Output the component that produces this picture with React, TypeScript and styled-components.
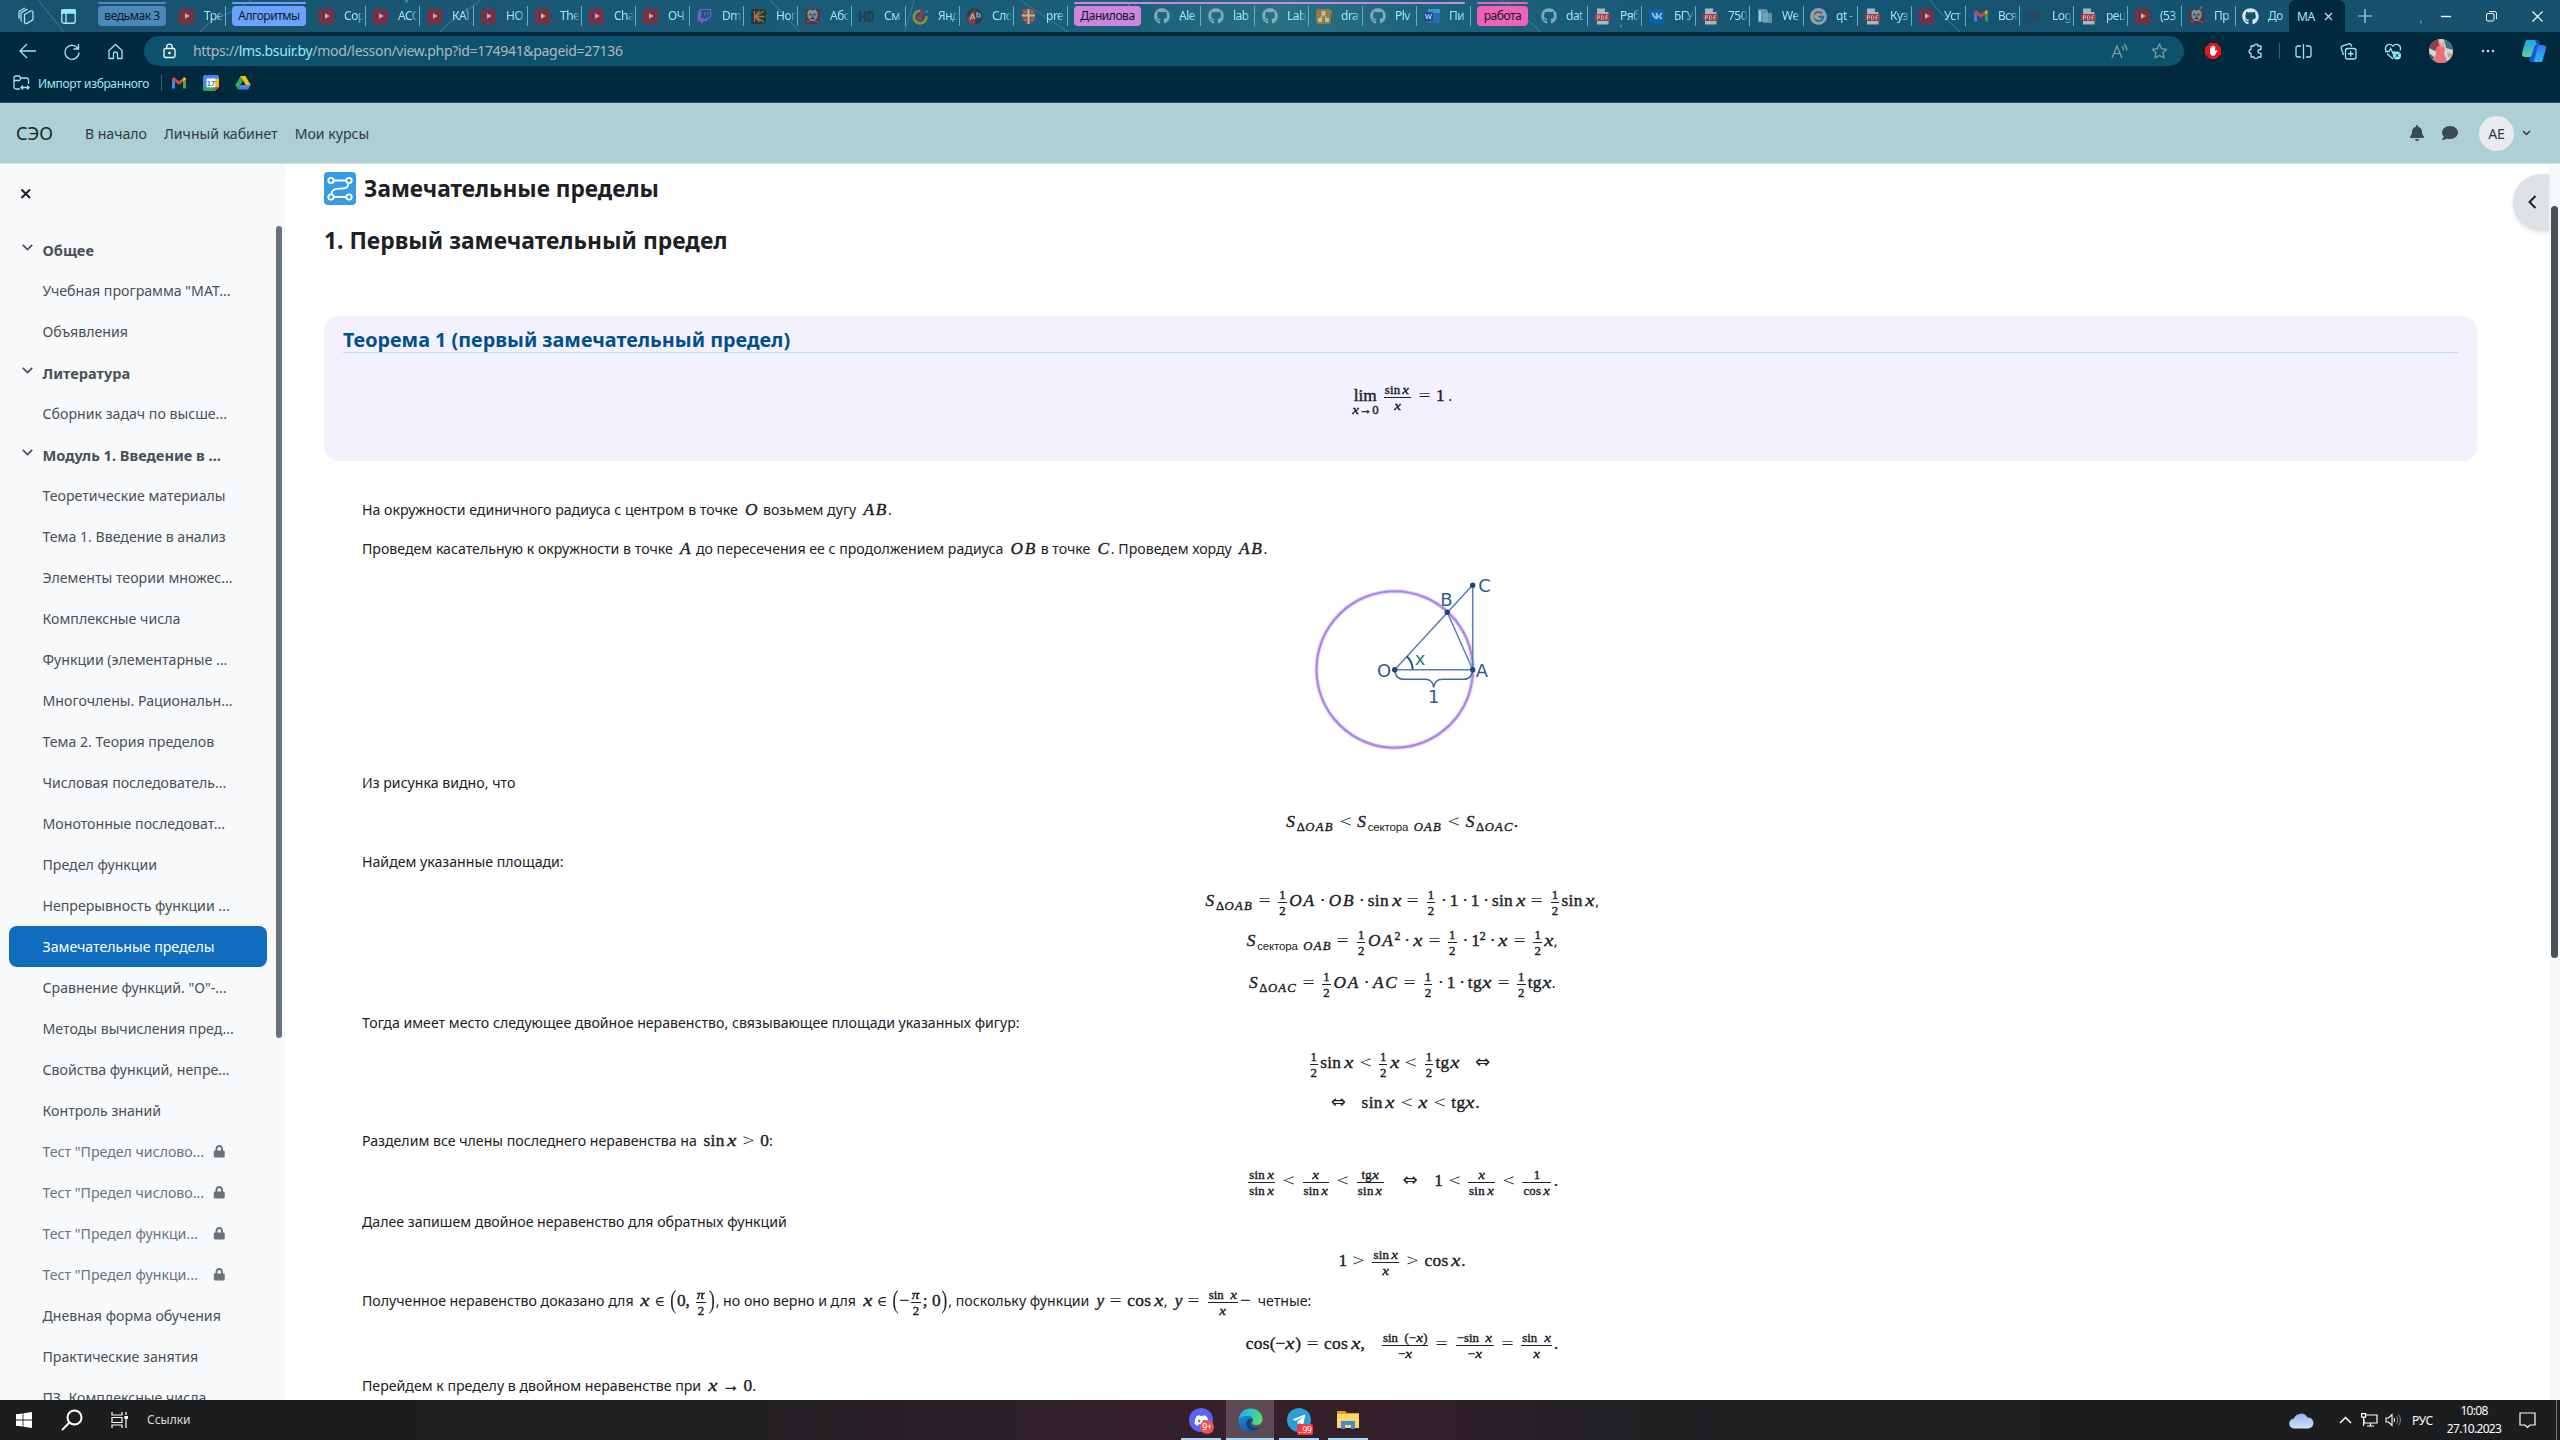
import React from 'react';
import styled, { createGlobalStyle, css } from 'styled-components';
import { FaGithub, FaTwitch, FaVk, FaBell, FaComment, FaLock, FaDiscord, FaTelegramPlane, FaGraduationCap } from 'react-icons/fa';

const GlobalStyle = createGlobalStyle`
  *, *::before, *::after { box-sizing: border-box; }
  html, body { margin: 0; padding: 0; background: #fff; }
  body { font-family: "Noto Sans", "Open Sans", sans-serif; overflow: hidden; }
`;

/* ---------- shell ---------- */
const Desktop = styled.div`
  width: 2560px;
  height: 1440px;
  display: flex;
  flex-direction: column;
  overflow: hidden;
`;

/* ---------- tab strip ---------- */
const TabStrip = styled.div`
  height: 32px;
  flex: none;
  position: relative;
  display: flex;
  color: #9be8f8;
  background: linear-gradient(90deg, #17526e 0%, #1a5975 25%, #1a5f7a 44%, #2a7083 50%, #1d627d 56%, #155473 70%, #16516d 100%);
`;
const StripTexture = styled.svg`
  position: absolute;
  inset: 0;
`;
const StripLead = styled.div`
  width: 92px;
  position: relative;
  display: flex;
  align-items: center;
  padding-left: 18px;
  gap: 26px;
`;
const Group = styled.div`
  position: relative;
  display: flex;
  align-items: flex-start;
  padding: 6px 6px 0;
`;
const GroupChip = styled.div<{ $color: string; $width: number }>`
  width: ${p => p.$width}px;
  height: 20px;
  border-radius: 4px;
  background: ${p => p.$color};
  color: #0b1a2a;
  font-size: 12px;
  letter-spacing: -0.45px;
  line-height: 19px;
  text-align: center;
  white-space: nowrap;
`;
const GroupBar = styled.div<{ $color: string; $width: number }>`
  position: absolute;
  top: 2px;
  left: 6px;
  width: ${p => p.$width}px;
  height: 2px;
  border-radius: 1px;
  background: ${p => p.$color};
  z-index: 1;
`;
const TabBox = styled.div<{ $plain?: boolean }>`
  width: 54px;
  height: 20px;
  margin-top: 6px;
  position: relative;
  display: flex;
  align-items: center;
  gap: 9px;
  padding-left: 6px;
  ${p => !p.$plain && css`border-right: 1px solid #5fb2c6;`}
`;
const Fav = styled.span`
  flex: none;
  width: 17px;
  height: 17px;
  display: flex;
  align-items: center;
  justify-content: center;
  opacity: 0.85;
`;
const TabText = styled.span`
  width: 21px;
  white-space: nowrap;
  font-size: 12px;
  line-height: 18px;
  letter-spacing: -0.5px;
  mask-image: linear-gradient(90deg, #000 60%, transparent 96%);
`;
const ActiveTab = styled.div`
  width: 56px;
  margin-left: -1px;
  position: relative;
  display: flex;
  align-items: center;
  justify-content: space-between;
  padding: 0 12px 0 8px;
  background: #01293e;
  border-radius: 6px 6px 0 0;
  font-size: 12px;
  letter-spacing: -0.3px;
`;
const WindowControls = styled.div`
  position: relative;
  flex: 1;
  display: flex;
  align-items: center;
  justify-content: space-between;
  padding: 0 17px 0 13px;
  color: #fff;
`;
const ControlButtons = styled.div`
  display: flex;
  align-items: center;
  gap: 35px;
`;
const FavSquare = styled.span<{ $bg: string; $fg?: string }>`
  width: 15px;
  height: 15px;
  border-radius: 3px;
  display: flex;
  align-items: center;
  justify-content: center;
  background: ${p => p.$bg};
  color: ${p => p.$fg ?? '#fff'};
  line-height: 1;
`;

type FavKind = 'yt' | 'twitch' | 'claw' | 'face' | 'hd' | 'ymusic' | 'ab' | 'crest' | 'gh' | 'ghw' | 'draw' | 'word' | 'pdf' | 'vk' | 'doc' | 'google' | 'gmail' | 'cap';

function GmailMark({ size }: { size: number }) {
  return (
    <svg width={size} height={size} viewBox="0 0 16 16">
      <path d="M1 13.500V4.200l3 2.300v7z" fill="#4285f4" />
      <path d="M12 13.500v-7l3-2.300v9.300z" fill="#34a853" />
      <path d="M1 4.200C1 2.600 2.700 2 4 3l4 3.200L12 3c1.300-1 3-.4 3 1.200L12 6.700 8 9.800 4 6.700z" fill="#ea4335" />
      <path d="M12 3c1.300-1 3-.4 3 1.200L12 6.700z" fill="#fbbc04" />
    </svg>
  );
}

function Favicon({ kind }: { kind: FavKind }) {
  switch (kind) {
    case 'yt': return <FavSquare $bg="#8a2a3c"><svg width="8" height="8" viewBox="0 0 8 8"><path d="M2 1.200v5.600L6.800 4z" fill="#dcc3cc" /></svg></FavSquare>;
    case 'twitch': return <FaTwitch size={15} color="#8264d8" />;
    case 'claw': return <FavSquare $bg="#2a2f33"><svg width="13" height="13" viewBox="0 0 13 13" stroke="#c07a3c" strokeWidth="1.300" fill="none"><path d="M2.500 1v11M12 1L3 6.500 12 12M3 6.500h9.500M7.500 1L3 6.500 7.500 12" /></svg></FavSquare>;
    case 'face': return <FavSquare $bg="#5a2f3a"><svg width="15" height="15" viewBox="0 0 15 15"><path d="M2.500 3l2-2.500 3 1 3-1 2 2.500v5l-3 4h-4l-3-4z" fill="#8f9ba3" /><path d="M4.500 5.500h2M8.500 5.500h2M5.500 9.500h4M7.500 6.500v1.500" stroke="#1c2c36" strokeWidth="1.300" /><path d="M1 13l4-1M10 12l4 1.500" stroke="#a8384a" strokeWidth="2" /></svg></FavSquare>;
    case 'hd': return <svg width="17" height="13" viewBox="0 0 17 13" fill="none" stroke="#263a47" strokeWidth="2.200"><path d="M2 1v11M7 1v11M2 6.500h5M10.500 2v9h1.500c4 0 4-9 0-9z" /></svg>;
    case 'ymusic': return <svg width="17" height="17" viewBox="0 0 17 17"><path d="M9 2.800A6.300 6.300 0 1 0 14.300 8" fill="none" stroke="#a99a2e" strokeWidth="2.600" /><circle cx="7.500" cy="10" r="2.500" fill="#b8323a" /><path d="M9 10V3l3 3" stroke="#b8323a" strokeWidth="1.800" fill="none" /><circle cx="14.500" cy="3.500" r="1.300" fill="#3a9ad0" /></svg>;
    case 'ab': return <svg width="17" height="17" viewBox="0 0 17 17"><circle cx="8.500" cy="8.500" r="8" fill="#2c3a44" /><path d="M9 .5L1 10a8 8 0 0 0 8 6.500z" fill="#a5353c" /><path d="M4 12l2.500-6L9 11M5 10h3M11 4v5h3V6h-3" stroke="#b9c4ca" fill="none" strokeWidth="1.200" /></svg>;
    case 'crest': return <svg width="15" height="17" viewBox="0 0 15 17"><path d="M1 1h13v9c0 3-3 5-6.500 6.500C4 15 1 13 1 10z" fill="#a04a48" /><path d="M7.500 1v15M1 7.500h13" stroke="#d5d2b0" strokeWidth="2" /><path d="M4 3v10M11 3v10" stroke="#c9b24e" strokeDasharray="2 2" /></svg>;
    case 'gh': return <FaGithub size={16} color="#8fb9c6" />;
    case 'ghw': return <FaGithub size={17} color="#fff" />;
    case 'draw': return <FavSquare $bg="#b07a2c"><svg width="13" height="13" viewBox="0 0 13 13" fill="#c9d0cc"><path d="M4.500 1h4v4h-4zM1 8h4v4H1zM8 8h4v4H8z" /><path d="M6.500 4L3 9M6.500 4L10 9" stroke="#c9d0cc" strokeWidth="1.200" /></svg></FavSquare>;
    case 'word': return <svg width="16" height="16" viewBox="0 0 16 16"><path d="M4 1h12v14H4z" fill="#2d6fb8" /><path d="M4 1h12v4H4z" fill="#4b9bd8" /><path d="M0 4h9v9H0z" fill="#1d4f9c" /><path d="M1.500 6l1.500 5 1.500-4.500L6 11l1.500-5" stroke="#d5e3f3" fill="none" /></svg>;
    case 'pdf': return <svg width="15" height="17" viewBox="0 0 15 17"><path d="M2 .5h8l3.500 3.500v12.500H2z" fill="#b9ccd3" /><path d="M10 .5V4h3.500z" fill="#264858" /><path d="M0 6h15v7H0z" fill="#b83a44" /><path d="M2.500 12V7.700h2v2h-2M6.500 7.700v3.800h1.200c1.500 0 1.500-3.800 0-3.800zM11 12V7.700h2M11 9.700h1.700" stroke="#e3c9ce" fill="none" strokeWidth=".9" /></svg>;
    case 'vk': return <FavSquare $bg="#0b63b5" $fg="#a9cfe6"><FaVk size={12} /></FavSquare>;
    case 'doc': return <svg width="16" height="16" viewBox="0 0 16 16"><path d="M1 1h8l2 2v11H1z" fill="#6d9fba" /><path d="M6 5h9v10H6z" fill="#8fb8cc" opacity=".7" /><path d="M3 3v10" stroke="#c7dde6" strokeWidth="2" /></svg>;
    case 'google': return <svg width="17" height="17" viewBox="0 0 17 17"><circle cx="8.500" cy="8.500" r="8.500" fill="#9ab3bc" /><g fill="none" strokeWidth="2"><path d="M12 5.500A4.600 4.600 0 0 0 4.600 6.300" stroke="#b8404a" /><path d="M4.600 6.300a4.600 4.600 0 0 0 0 4.400" stroke="#c29b2b" /><path d="M4.600 10.700a4.600 4.600 0 0 0 7 1.300" stroke="#2e8c54" /><path d="M11.600 12a4.600 4.600 0 0 0 1.500-3.200H8.500" stroke="#3267b8" /></g></svg>;
    case 'gmail': return <GmailMark size={16} />;
    case 'cap': return <FaGraduationCap size={16} color="#2a4756" />;
  }
}

interface TabInfo { text: string; icon: FavKind }
const youtubeTabs: TabInfo[] = ['Сор', 'АСС', 'КАІ', 'НО', 'The', 'Cha', 'ОЧ'].map(text => ({ text, icon: 'yt' as const }));
const middleTabs: TabInfo[] = [
  ...youtubeTabs,
  { text: 'Dm', icon: 'twitch' }, { text: 'Ног', icon: 'claw' }, { text: 'Абс', icon: 'face' }, { text: 'См', icon: 'hd' },
  { text: 'Янд', icon: 'ymusic' }, { text: 'Сло', icon: 'ab' }, { text: 'pre', icon: 'crest' },
];
const danilovaTabs: TabInfo[] = [
  { text: 'Ale', icon: 'gh' }, { text: 'lab', icon: 'gh' }, { text: 'Lab', icon: 'gh' }, { text: 'dra', icon: 'draw' },
  { text: 'Plv', icon: 'gh' }, { text: 'Пи', icon: 'word' },
];
const workTabs: TabInfo[] = [
  { text: 'dat', icon: 'gh' }, { text: 'Ряб', icon: 'pdf' }, { text: 'БГУ', icon: 'vk' }, { text: '750', icon: 'pdf' },
  { text: 'We', icon: 'doc' }, { text: 'qt -', icon: 'google' }, { text: 'Куз', icon: 'pdf' }, { text: 'Уст', icon: 'yt' },
  { text: 'Вся', icon: 'gmail' }, { text: 'Log', icon: 'cap' }, { text: 'рец', icon: 'pdf' }, { text: '(53', icon: 'yt' },
  { text: 'Пр', icon: 'face' },
];

function Tab({ tab, plain }: { tab: TabInfo; plain?: boolean }) {
  return <TabBox $plain={plain}><Fav><Favicon kind={tab.icon} /></Fav><TabText>{tab.text}</TabText></TabBox>;
}
function TabGroup({ name, color, width, bar }: { name: string; color: string; width: number; bar: number }) {
  return <Group><GroupBar $color={color} $width={bar} /><GroupChip $color={color} $width={width}>{name}</GroupChip></Group>;
}

/* ---------- toolbar ---------- */
const Toolbar = styled.div`
  height: 36px;
  flex: none;
  display: flex;
  align-items: center;
  padding-top: 2px;
  background: #01293e;
  color: #9be8f8;
`;
const NavButtons = styled.div`
  width: 144px;
  display: flex;
  align-items: center;
  gap: 28px;
  padding-left: 19px;
`;
const AddressBar = styled.div`
  width: 2040px;
  height: 30px;
  border-radius: 15px;
  background: #0d526d;
  display: flex;
  align-items: center;
  padding: 0 16px 0 19px;
`;
const Url = styled.span`
  flex: 1;
  margin: -2px 0 0 17px;
  font-size: 14px;
  letter-spacing: -0.32px;
  color: #b3b8bb;
`;
const UrlHost = styled.span`color: #9be8f8;`;
const AddressIcons = styled.div`
  display: flex;
  gap: 23px;
  color: #8d9ca3;
`;
const ToolIcons = styled.div`
  flex: 1;
  display: flex;
  align-items: center;
  justify-content: space-between;
  padding: 0 14px 0 21px;
`;
const ThinRule = styled.span<{ $pull?: number }>`
  width: 1px;
  height: 16px;
  margin: 0 ${p => -(p.$pull ?? 0)}px;
  background: #3a5c6d;
`;
const Profile = styled.svg`
  border-radius: 50%;
`;
const BookmarkBar = styled.div`
  height: 35px;
  flex: none;
  display: flex;
  align-items: center;
  padding: 0 0 4px 13px;
  background: #01293e;
  border-bottom: 1px solid #1a566f;
  color: #9be8f8;
  font-size: 12px;
  letter-spacing: -0.36px;
`;
const BookmarkLabel = styled.span`margin: 0 12px 0 8px;`;
const BookmarkIcons = styled.div`
  display: flex;
  align-items: center;
  gap: 16px;
  margin-left: 9px;
`;

/* ---------- site header ---------- */
const SiteHeader = styled.header`
  height: 61px;
  flex: none;
  display: flex;
  align-items: center;
  padding: 0 29px 0 16px;
  background: #aecfd4;
  border-bottom: 1px solid #d3e4e7;
  color: #1f2b30;
`;
const Brand = styled.span`
  font-size: 18px;
  margin-right: 32px;
  color: #16232a;
`;
const HeaderNav = styled.nav`
  flex: 1;
  display: flex;
  gap: 17px;
  font-size: 14.100px;
  color: #2c3a40;
`;
const HeaderTools = styled.div`
  display: flex;
  align-items: center;
  color: #3b4a50;
`;
const HeaderIcon = styled.span<{ $mr: number }>`
  display: flex;
  margin-right: ${p => p.$mr}px;
`;
const Avatar = styled.span`
  width: 35px;
  height: 35px;
  border-radius: 50%;
  background: #e9ecef;
  color: #343a40;
  font-size: 14px;
  display: flex;
  align-items: center;
  justify-content: center;
  margin-right: 8px;
`;

/* ---------- course index ---------- */
const Page = styled.div`
  flex: 1;
  min-height: 0;
  display: flex;
  background: #fff;
`;
const Sidebar = styled.aside`
  width: 285px;
  flex: none;
  display: flex;
  flex-direction: column;
  background: #f8f9fb;
  overflow: hidden;
`;
const SidebarTop = styled.div`
  height: 62px;
  flex: none;
  padding: 19px 0 0 20px;
`;
const SidebarBody = styled.div`
  flex: 1;
  min-height: 0;
  display: flex;
  justify-content: space-between;
  padding-right: 3px;
`;
const IndexList = styled.div`
  width: 258px;
  margin: 3px 0 0 9px;
`;
const IndexRow = styled.div<{ $section?: boolean; $active?: boolean; $dim?: boolean }>`
  height: 41px;
  display: flex;
  align-items: center;
  padding-left: ${p => (p.$section ? 12.500 : 33.500)}px;
  border-radius: 8px;
  white-space: nowrap;
  font-size: 14.150px;
  color: ${p => (p.$dim ? '#6a737b' : '#495057')};
  ${p => p.$section && css`font-weight: 700; font-size: 14.600px;`}
  ${p => p.$active && css`background: #0f6cbf; color: #fff;`}
`;
const Caret = styled.svg`
  width: 11px;
  margin: -4px 10px 0 0;
`;
const LockedText = styled.span`
  width: 170px;
`;
const IndexThumb = styled.div`
  width: 6px;
  height: 812px;
  border-radius: 3px;
  background: #6a737b;
`;

interface IndexItem { text: string; kind?: 'section' | 'active' | 'locked' }
const indexItems: IndexItem[] = [
  { text: 'Общее', kind: 'section' },
  { text: 'Учебная программа "МАТ...' },
  { text: 'Объявления' },
  { text: 'Литература', kind: 'section' },
  { text: 'Сборник задач по высше...' },
  { text: 'Модуль 1. Введение в ...', kind: 'section' },
  { text: 'Теоретические материалы' },
  { text: 'Тема 1. Введение в анализ' },
  { text: 'Элементы теории множес...' },
  { text: 'Комплексные числа' },
  { text: 'Функции (элементарные ...' },
  { text: 'Многочлены. Рациональн...' },
  { text: 'Тема 2. Теория пределов' },
  { text: 'Числовая последователь...' },
  { text: 'Монотонные последоват...' },
  { text: 'Предел функции' },
  { text: 'Непрерывность функции ...' },
  { text: 'Замечательные пределы', kind: 'active' },
  { text: 'Сравнение функций. "О"-...' },
  { text: 'Методы вычисления пред...' },
  { text: 'Свойства функций, непре...' },
  { text: 'Контроль знаний' },
  { text: 'Тест "Предел числово...', kind: 'locked' },
  { text: 'Тест "Предел числово...', kind: 'locked' },
  { text: 'Тест "Предел функци...', kind: 'locked' },
  { text: 'Тест "Предел функци...', kind: 'locked' },
  { text: 'Дневная форма обучения' },
  { text: 'Практические занятия' },
  { text: 'ПЗ. Комплексные числа' },
];

/* ---------- lesson ---------- */
const Main = styled.main`
  flex: 1;
  min-width: 0;
  padding: 8px 72px 0 39px;
  color: #1d2125;
  overflow: hidden;
`;
const TitleRow = styled.div`
  display: flex;
  align-items: center;
  gap: 8px;
  height: 33px;
`;
const Title = styled.h1`
  margin: 0;
  font-size: 22.650px;
  line-height: 33px;
`;
const Subtitle = styled.h2`
  margin: 20px 0 0;
  font-size: 22.850px;
  line-height: 32px;
`;
const TheoremBox = styled.section`
  margin-top: 59px;
  height: 145px;
  border-radius: 15px;
  background: #f3f0ff;
  padding: 12px 19px 0;
`;
const TheoremTitle = styled.h3`
  margin: 0;
  height: 25px;
  line-height: 24px;
  font-size: 19.800px;
  color: #00508c;
  border-bottom: 1px solid #b9defb;
`;
const Proof = styled.div`
  margin-top: 29px;
  padding: 0 38px;
`;
const Line = styled.div<{ $h: number; $center?: boolean }>`
  height: ${p => p.$h}px;
  line-height: ${p => p.$h}px;
  white-space: nowrap;
  font-size: 14.150px;
  text-align: ${p => (p.$center ? 'center' : 'left')};
`;
const Figure = styled.div`
  height: 196px;
  display: flex;
  justify-content: center;
  align-items: flex-end;
`;

/* math typesetting */
const M = styled.span`
  font-family: "Liberation Serif", "Times New Roman", serif;
  font-size: 17.300px;
  margin-left: 3px;
  -webkit-text-stroke: 0.4px currentColor;
`;
const It = styled.i<{ $flush?: boolean }>`
  letter-spacing: ${p => (p.$flush ? '0' : '0.1em')};
  margin-left: 0.03em;
`;
const X = styled.i`
  display: inline-block;
  width: 0.572em;
  line-height: 1;
  text-align: center;
  transform: scaleX(1.200);
`;
const Fn = styled.span<{ $tight?: boolean }>`
  letter-spacing: 0.02em;
  margin-right: ${p => (p.$tight ? 0 : '0.15em')};
`;
const Rel = styled.span`
  display: inline-block;
  width: 0.778em;
  margin: 0 0.278em;
  line-height: 1;
  text-align: center;
  transform: scaleX(1.250);
  -webkit-text-stroke: 0;
`;
const InRel = styled.span`
  margin: 0 0.3em;
  font-family: "DejaVu Serif", serif;
  font-size: 0.82em;
  -webkit-text-stroke: 0;
`;
const IffRel = styled.span`
  display: inline-block;
  width: 1em;
  margin: 0 0.278em;
  line-height: 1;
  text-align: center;
  font-family: "DejaVu Sans", sans-serif;
  font-size: 1.050em;
  -webkit-text-stroke: 0;
`;
const DotOp = styled.span`
  display: inline-block;
  width: 0.278em;
  margin: 0 0.222em;
  line-height: 1;
  text-align: center;
`;
const SubText = styled.span`
  font-size: 12.700px;
  line-height: 1;
  position: relative;
  top: 3.500px;
`;
const SubWord = styled.span`
  font-family: "Liberation Sans", Arial, sans-serif;
  font-size: 11.500px;
  -webkit-text-stroke: 0;
  margin-right: 5px;
  letter-spacing: -0.15px;
`;
const SupText = styled.span`
  font-size: 12px;
  line-height: 1;
  position: relative;
  top: -6px;
`;
const FracBox = styled.span`
  display: inline-flex;
  flex-direction: column;
  align-items: center;
  vertical-align: 7.500px;
  margin: 0 2.200px;
  font-size: 12.800px;
  line-height: 12px;
`;
const Num = styled.span`
  align-self: stretch;
  height: 13px;
  padding: 0 1px;
  text-align: center;
`;
const Den = styled.span`
  align-self: stretch;
  padding: 2px 1px 0;
  border-top: 1px solid #1d2125;
  text-align: center;
`;
const LimBox = styled.span`
  display: inline-flex;
  flex-direction: column;
  align-items: center;
  line-height: 16px;
  margin-right: 3px;
`;
const LimUnder = styled.span`
  font-size: 12.800px;
  line-height: 10px;
`;
const Big = styled.span`
  display: inline-block;
  line-height: 1;
  transform: scaleY(1.450);
  margin: 0 1px;
  -webkit-text-stroke: 0.1px currentColor;
`;
const Space = styled.span<{ $w: number }>`
  display: inline-block;
  width: ${p => p.$w}px;
`;

const Frac = ({ n, d }: { n: React.ReactNode; d: React.ReactNode }) => <FracBox><Num>{n}</Num><Den>{d}</Den></FracBox>;
const Half = () => <Frac n="1" d="2" />;
const x = <X>x</X>;
const sinx = <><Fn>sin</Fn>{x}</>;
const cosx = <><Fn>cos</Fn>{x}</>;
const tgx = <><Fn $tight>tg</Fn>{x}</>;
const lt = <Rel>&lt;</Rel>;
const gt = <Rel>&gt;</Rel>;
const eq = <Rel>=</Rel>;
const dot = <DotOp>·</DotOp>;
const iff = <IffRel>⇔</IffRel>;
const S = ({ tri, sector }: { tri?: string; sector?: boolean }) => (
  <><It>S</It><SubText>{sector ? <><SubWord>сектора</SubWord><It>OAB</It></> : <>Δ<It>{tri}</It></>}</SubText></>
);

function CircleFigure() {
  return (
    <svg width="200" height="194" viewBox="1301 569 200 194">
      <circle cx="1394.700" cy="669.500" r="78.200" fill="none" stroke="#e0d0fb" strokeWidth="4.200" />
      <circle cx="1394.700" cy="669.500" r="78.200" fill="none" stroke="#ab83e8" strokeWidth="2" />
      <g fill="none" stroke="#5a7fb5" strokeWidth="1.500">
        <path d="M1394.700 669.800L1472.700 585V669.800Z" />
        <path d="M1447.300 612.300L1472.700 669.800" />
        <path d="M1395 672c1 5 4 7.300 9 7.300h21c5 0 8 2 8.700 8 .7-6 3.700-8 8.700-8h21c5 0 8-2.300 9-7.300" stroke="#44679f" />
      </g>
      <path d="M1407 656.500q5.500 5.500 5.700 13" fill="none" stroke="#1f4480" strokeWidth="1.800" />
      <g fill="#1f4480"><circle cx="1394.700" cy="669.800" r="2.700" /><circle cx="1472.700" cy="669.800" r="2.700" /><circle cx="1447.300" cy="612.300" r="2.700" /><circle cx="1472.700" cy="585.300" r="2.700" /></g>
      <g fontFamily="DejaVu Sans, sans-serif" fontSize="18" fill="#33578f" textAnchor="middle">
        <text x="1384" y="677">O</text>
        <text x="1482" y="677">A</text>
        <text x="1446.500" y="605.500">B</text>
        <text x="1484.500" y="591.500">C</text>
        <text x="1433.700" y="702.500">1</text>
        <text x="1420" y="664.500" fill="#2b8077">x</text>
      </g>
    </svg>
  );
}

/* ---------- right edge ---------- */
const RightEdge = styled.div`
  position: relative;
  width: 11px;
  flex: none;
  background: #f8f9fa;
  padding: 42px 0 0 2px;
`;
const PageThumb = styled.div`
  width: 7px;
  height: 752px;
  border-radius: 4px;
  background: #495057;
`;
const DrawerToggle = styled.div`
  position: absolute;
  top: 10px;
  right: 11px;
  width: 36px;
  height: 57px;
  border-radius: 28px 0 0 28px;
  background: #dee2e6;
  box-shadow: 0 2px 4px rgba(0, 0, 0, 0.1);
  display: flex;
  align-items: center;
  justify-content: center;
  padding: 0 0 1px 2px;
`;

/* ---------- taskbar ---------- */
const Taskbar = styled.footer`
  height: 40px;
  flex: none;
  display: grid;
  grid-template-columns: 1172px 1fr 300px;
  color: #fff;
  background: linear-gradient(90deg, #1b1d1f 0%, #1d1e20 26%, #33202b 44%, #351f2b 50%, #301f29 56%, #222024 62%, #1c1e20 68%, #1b1d1f 100%);
`;
const TaskLeft = styled.div`
  display: flex;
  align-items: center;
  padding-left: 16px;
  font-size: 12px;
  color: #dcdcdc;
`;
const TaskLabel = styled.span`margin: -2px 0 0 19px;`;
const TaskIconWrap = styled.span<{ $ml: number }>`
  display: flex;
  margin-left: ${p => p.$ml}px;
`;
const TaskApps = styled.div`
  display: flex;
`;
const TaskApp = styled.div<{ $w: number; $current?: boolean; $ml: number }>`
  position: relative;
  width: ${p => p.$w}px;
  margin-left: ${p => p.$ml}px;
  height: 40px;
  display: flex;
  align-items: center;
  justify-content: center;
  border-bottom: 2px solid #a9d7f7;
  padding-top: 2px;
  background: ${p => (p.$current ? '#5c4a54' : 'transparent')};
`;
const RoundApp = styled.span<{ $bg: string }>`
  width: 24px;
  height: 24px;
  border-radius: 50%;
  background: ${p => p.$bg};
  display: flex;
  align-items: center;
  justify-content: center;
`;
const AppBadge = styled.span<{ $square?: boolean }>`
  position: absolute;
  right: ${p => (p.$square ? 6 : 7)}px;
  bottom: ${p => (p.$square ? 3 : 4)}px;
  width: ${p => (p.$square ? 16 : 14)}px;
  height: ${p => (p.$square ? 11 : 14)}px;
  border-radius: ${p => (p.$square ? '2px' : '50%')};
  background: ${p => (p.$square ? '#f13a3a' : '#ec5257')};
  font-size: 8.500px;
  letter-spacing: -0.2px;
  line-height: ${p => (p.$square ? 11 : 14)}px;
  text-align: center;
`;
const Tray = styled.div`
  display: flex;
  align-items: center;
  padding-left: 29px;
`;
const TrayItem = styled.span<{ $ml: number }>`
  display: flex;
  flex: none;
  margin-left: ${p => p.$ml}px;
  font-size: 12px;
  letter-spacing: -0.2px;
`;
const Clock = styled.div`
  width: 58px;
  margin-left: 12px;
  text-align: center;
  font-size: 12px;
  letter-spacing: -0.700px;
  line-height: 18px;
  white-space: nowrap;
`;
const DesktopPeek = styled.span`
  width: 1px;
  height: 40px;
  margin-left: 20px;
  background: #76787a;
`;

export default function App() {
  return (
    <Desktop>
      <GlobalStyle />
      <TabStrip>
        <StripTexture width="2560" height="32" fill="none" stroke="#4c8c9f" strokeWidth="1.500" opacity=".45">
          <path d="M38 0l26 32M200 32C210 18 240 10 252 0M440 32C455 14 478 5 480 0M770 0l30 32M905 32L914 0M1020 0L1068 32M1500 0q30 20 40 32M1930 0q12 16 30 32" />
          <path d="M405 1h3M466 10h2M1128 6h2M1180 20h2M1330 12h2M1620 26h2M2200 8h2M2420 22h2" stroke="#69c0dc" strokeWidth="3" />
        </StripTexture>
        <StripLead>
          <svg width="17" height="18" viewBox="0 0 17 18" fill="none" stroke="#9be8f8" strokeWidth="1.300" strokeLinejoin="round"><path d="M6.500 7.500l6-3.500c1-.5 2.500 0 2.500 1.500v6c0 .8-.4 1.500-1 1.900l-5 3c-1 .6-2.500 0-2.500-1.400zM4 14.500c-.6-.4-1-1-1-1.700v-6c0-.7.4-1.300 1-1.700l5.500-3M1 11.500V5.300c0-.7.400-1.300 1-1.600L7 1" /></svg>
          <svg width="15" height="15" viewBox="0 0 15 15" fill="none" stroke="#9be8f8" strokeWidth="1.400"><rect x=".8" y=".8" width="13.400" height="13.400" rx="2" /><path d="M.8 3h13.400M5 3v11" /><path d="M1 1h13v3H1z" fill="#9be8f8" /></svg>
        </StripLead>
        <TabGroup name="ведьмак 3" color="#4a89bb" width={68} bar={68} />
        <Tab tab={{ text: 'Тре', icon: 'yt' }} />
        <TabGroup name="Алгоритмы" color="#6ba2ff" width={74} bar={74} />
        {middleTabs.map((t, i) => <Tab key={i} tab={t} />)}
        <TabGroup name="Данилова" color="#cd86dc" width={67} bar={391} />
        {danilovaTabs.map((t, i) => <Tab key={i} tab={t} />)}
        <TabGroup name="работа" color="#f062b8" width={51} bar={51} />
        {workTabs.map((t, i) => <Tab key={i} tab={t} />)}
        <Tab plain tab={{ text: 'До', icon: 'ghw' }} />
        <ActiveTab><span>МА</span><svg width="9" height="9" stroke="#9be8f8" strokeWidth="1.300"><path d="M1 1l7 7M8 1L1 8" /></svg></ActiveTab>
        <WindowControls>
          <svg width="14" height="14" stroke="#9be8f8" strokeWidth="1.200"><path d="M7 0v14M0 7h14" /></svg>
          <ControlButtons>
            <svg width="10" height="10" stroke="#fff"><path d="M0 5.500h10" strokeWidth="1.400" /></svg>
            <svg width="11" height="11" fill="none" stroke="#fff"><rect x=".5" y="2.500" width="7.500" height="7.500" rx="1.500" /><path d="M3 .5h5.500a2 2 0 0 1 2 2V8" /></svg>
            <svg width="11" height="11" stroke="#fff" strokeWidth="1.200"><path d="M.5.5l10 10M10.500.5l-10 10" /></svg>
          </ControlButtons>
        </WindowControls>
      </TabStrip>

      <Toolbar>
        <NavButtons>
          <svg width="17" height="16" fill="none" stroke="currentColor" strokeWidth="1.300"><path d="M17 8H1M8 1L1 8l7 7" /></svg>
          <svg width="16" height="17" viewBox="0 0 16 17" fill="none" stroke="currentColor" strokeWidth="1.300"><path d="M14.200 6A7 7 0 1 0 15 9.500M14.500 1v5H9.500" /></svg>
          <svg width="15" height="17" viewBox="0 0 15 17" fill="none" stroke="currentColor" strokeWidth="1.300" strokeLinejoin="round"><path d="M1 7.500L7.500 1.500 14 7.500V15.500H9.500V11a2 2 0 0 0-4 0v4.500H1z" /></svg>
        </NavButtons>
        <AddressBar>
          <svg width="13" height="16" viewBox="0 0 13 16" fill="none" stroke="#fff" strokeWidth="1.300"><rect x="1" y="5.500" width="11" height="9" rx="1.500" /><path d="M3.700 5.500V4a2.800 2.800 0 0 1 5.600 0v1.500" /><circle cx="6.500" cy="10" r=".7" fill="#fff" /></svg>
          <Url>https://<UrlHost>lms.bsuir.by</UrlHost>/mod/lesson/view.php?id=174941&amp;pageid=27136</Url>
          <AddressIcons>
            <svg width="17" height="16" viewBox="0 0 17 16" fill="none" stroke="currentColor" strokeWidth="1.200"><path d="M1 15L6 3l5 12M2.800 10.500h6.400M11 3.500q1.500 1.500 1.500 4M13 1q3 2.500 2.800 6.500" /></svg>
            <svg width="17" height="16" viewBox="0 0 17 16" fill="none" stroke="currentColor" strokeWidth="1.200" strokeLinejoin="round"><path d="M8.500 1l2.200 4.700 5.100.6-3.800 3.500 1 5.100-4.500-2.500L4 14.900l1-5.100L1.200 6.300l5.100-.6z" /></svg>
          </AddressIcons>
        </AddressBar>
        <ToolIcons>
          <svg width="16" height="16" viewBox="0 0 16 16"><path d="M4.700 0h6.600L16 4.700v6.600L11.300 16H4.700L0 11.300V4.700z" fill="#e8131b" /><path d="M5 8.500V5a.7.7 0 0 1 1.300 0V3.500a.7.7 0 0 1 1.300 0V3a.7.7 0 0 1 1.300 0v.8a.7.7 0 0 1 1.300 0v4.500l1-1c.8-.4 1.300.2 1 .8l-2 3.800c-.5 1-3.300 1.200-4.200 0C5.300 11 5 10 5 8.500z" fill="#fff" /></svg>
          <svg width="15" height="16" viewBox="0 0 15 16" fill="none" stroke="currentColor" strokeWidth="1.300" strokeLinejoin="round"><path d="M3 3h3a2 1.800 0 0 1 4 0h3v3.500h-1a1.800 1.800 0 0 0 0 3.800h1V14h-3a2 1.600 0 0 1-4 0H3v-3.700a1.900 1.900 0 0 1 0-3.800z" /></svg>
          <ThinRule $pull={12} />
          <svg width="17" height="15" viewBox="0 0 17 15" fill="none" stroke="currentColor" strokeWidth="1.300"><path d="M6 2H3a2 2 0 0 0-2 2v7a2 2 0 0 0 2 2h3M11 2h3a2 2 0 0 1 2 2v7a2 2 0 0 1-2 2h-3M8.500 0v15" /></svg>
          <svg width="17" height="17" viewBox="0 0 17 17" fill="none" stroke="currentColor" strokeWidth="1.300"><rect x="5.500" y="5.500" width="10.500" height="10.500" rx="2.200" /><path d="M10.750 8v5.500M8 10.750h5.500M3.500 12L1.300 5.300a2 2 0 0 1 1.200-2.500L8.700.9a2 2 0 0 1 2.500 1.200l.4 1.400" /></svg>
          <svg width="18" height="17" viewBox="0 0 18 17" fill="none" stroke="currentColor" strokeWidth="1.300"><path d="M2 7.500C0 3 5-.8 9 3c4-3.800 9 0 7 4.500M1 8.500h4l1.700-3 2.300 5 1.500-2.500M3 10.500l6 5.500" /><circle cx="13" cy="12.500" r="4" fill="currentColor" stroke="none" /><path d="M11 14.500l4-4M11.500 11l3 3" stroke="#01293e" strokeWidth="1" /></svg>
          <Profile width="24" height="24" viewBox="0 0 24 24"><rect width="24" height="24" fill="#cfd9cf" /><path d="M0 0h9l3 7-6 5-6-3z" fill="#8c3f47" /><path d="M15 0l9 4v7l-7-2z" fill="#39737a" /><path d="M7 9c2-3 8-3 9 1l-1 5 4 9H3l4-9z" fill="#ea6f78" /><path d="M10 2l2 6M15 2l-2 6" stroke="#f4949a" strokeWidth="2" /><path d="M0 14l5 4-2 6H0z" fill="#2e6b63" /><path d="M18 13l6 2v5l-5-2z" fill="#d8a690" /></Profile>
          <svg width="14" height="4" fill="currentColor"><circle cx="2" cy="2" r="1.300" /><circle cx="7" cy="2" r="1.300" /><circle cx="12" cy="2" r="1.300" /></svg>
          <svg width="24" height="22" viewBox="0 0 24 22">
            <defs>
              <linearGradient id="cpA" x1="0" y1="0" x2="0" y2="1"><stop offset="0" stopColor="#1aa7ee" /><stop offset="1" stopColor="#5ed08a" /></linearGradient>
              <linearGradient id="cpB" x1="0" y1="0" x2="0" y2="1"><stop offset="0" stopColor="#2f7bf2" /><stop offset="1" stopColor="#2bb5f5" /></linearGradient>
            </defs>
            <path d="M5 0h9c2 0 2.500 1.500 2 3l-4 11c-.6 2-2 3-4 3H3c-2.500 0-3.500-2-2.800-4.300L3 3C3.400 1 4 0 5 0z" fill="url(#cpA)" />
            <path d="M13 0h2c1.500 0 2 1 2.400 2.500L18 5h-3z" fill="#0b50c8" />
            <path d="M19 22h-9c-2 0-2.500-1.500-2-3l4-11c.6-2 2-3 4-3h5c2.500 0 3.500 2 2.800 4.300L21 19c-.4 2-1 3-2 3z" fill="url(#cpB)" />
            <path d="M16 5h-3L9.500 15.500C9 17 8 17 6.500 17H7c1 3 1 5 4 5h1z" fill="#1856d8" />
          </svg>
        </ToolIcons>
      </Toolbar>
      <BookmarkBar>
        <svg width="17" height="16" viewBox="0 0 17 16" fill="none" stroke="currentColor" strokeWidth="1.300"><path d="M7 14H3a2 2 0 0 1-2-2V3a2 2 0 0 1 2-2h3l2 2h5.500a2 2 0 0 1 2 2v4M1 5.500h5.500L8 3M8 12.500h8M10 10.500l-2 2 2 2M14 10.500l2 2-2 2" /></svg>
        <BookmarkLabel>Импорт избранного</BookmarkLabel>
        <ThinRule />
        <BookmarkIcons>
          <GmailMark size={16} />
          <svg width="16" height="16" viewBox="0 0 16 16"><path d="M1.500 0h13L16 1.500V12l-4 4H1.500L0 14.500v-13z" fill="#4285f4" /><path d="M12 3.500h4V12h-4z" fill="#fbbc04" /><path d="M3.500 12H12v4H1.500L0 14.500V12z" fill="#34a853" /><path d="M12 12h4l-4 4z" fill="#ea4335" /><path d="M3.500 3.500H12.300V12.300H3.500z" fill="#fff" /><text x="8" y="10.800" fontSize="7.500" fontWeight="700" fill="#1a73e8" textAnchor="middle" fontFamily="Liberation Sans, sans-serif" letterSpacing="0">17</text></svg>
          <svg width="16" height="14" viewBox="0 0 16 14"><path d="M5.500 0h5L8 4.500 3 13.500.3 9z" fill="#34a853" /><path d="M10.500 0l5.200 9h-5L5.500 0z" fill="#fbbc04" /><path d="M5.500 9h10.200L13 13.500H3z" fill="#4285f4" /></svg>
        </BookmarkIcons>
      </BookmarkBar>

      <SiteHeader>
        <Brand>СЭО</Brand>
        <HeaderNav><span>В начало</span><span>Личный кабинет</span><span>Мои курсы</span></HeaderNav>
        <HeaderTools>
          <HeaderIcon $mr={17}><FaBell size={16} /></HeaderIcon>
          <HeaderIcon $mr={21}><FaComment size={16} /></HeaderIcon>
          <Avatar>АЕ</Avatar>
          <svg width="9" height="6" fill="none" stroke="#2c3a40" strokeWidth="1.500"><path d="M1 1l3.500 3.500L8 1" /></svg>
        </HeaderTools>
      </SiteHeader>

      <Page>
        <Sidebar>
          <SidebarTop><svg width="12" height="12" stroke="#1d2125" strokeWidth="2"><path d="M1.500 1.500l8.500 8.500M10 1.500L1.500 10" /></svg></SidebarTop>
          <SidebarBody>
            <IndexList>
              {indexItems.map((item, i) => (
                <IndexRow key={i} $section={item.kind === 'section'} $active={item.kind === 'active'} $dim={item.kind === 'locked'}>
                  {item.kind === 'section' && <Caret height="7" viewBox="0 0 11 7" fill="none" stroke="#495057" strokeWidth="1.700"><path d="M.8.8l4.700 4.700L10.200.8" /></Caret>}
                  {item.kind === 'locked' ? <><LockedText>{item.text}</LockedText><FaLock size={12.500} /></> : item.text}
                </IndexRow>
              ))}
            </IndexList>
            <IndexThumb />
          </SidebarBody>
        </Sidebar>

        <Main>
          <TitleRow>
            <svg width="32" height="33" viewBox="0 0 32 33"><rect width="32" height="33" rx="4" fill="#399be2" /><g fill="none" stroke="#fff" strokeWidth="1.800"><circle cx="7" cy="8.500" r="2.700" /><circle cx="25" cy="8.500" r="2.700" /><circle cx="7" cy="25" r="2.700" /><circle cx="25" cy="25" r="2.700" /><path d="M9.700 8.500h12.600M24.500 11.200c-.5 5-3 5.500-8.500 5.500s-8 1-8.700 5.500M9.700 25h12.600" /></g></svg>
            <Title>Замечательные пределы</Title>
          </TitleRow>
          <Subtitle>1. Первый замечательный предел</Subtitle>
          <TheoremBox>
            <TheoremTitle>Теорема 1 (первый замечательный предел)</TheoremTitle>
            <Line $h={86} $center><M><LimBox><span>lim</span><LimUnder>{x}→0</LimUnder></LimBox><Frac n={sinx} d={x} />{eq}1</M> .</Line>
          </TheoremBox>
          <Proof>
            <Line $h={40}>На окружности единичного радиуса с центром в точке <M><It>O</It></M> возьмем дугу <M><It>AB</It></M>.</Line>
            <Line $h={37}>Проведем касательную к окружности в точке <M><It>A</It></M> до пересечения ее с продолжением радиуса <M><It>OB</It></M> в точке <M><It>C</It></M>. Проведем хорду <M><It>AB</It></M>.</Line>
            <Figure><CircleFigure /></Figure>
            <Line $h={40}>Из рисунка видно, что</Line>
            <Line $h={38} $center><M><S tri="OAB" />{lt}<S sector />{lt}<S tri="OAC" />.</M></Line>
            <Line $h={41}>Найдем указанные площади:</Line>
            <Line $h={37} $center><M><S tri="OAB" />{eq}<Half /><It>OA</It>{dot}<It>OB</It>{dot}{sinx}{eq}<Half />{dot}1{dot}1{dot}{sinx}{eq}<Half />{sinx}</M>,</Line>
            <Line $h={43} $center><M><S sector />{eq}<Half /><It>OA</It><SupText>2</SupText>{dot}{x}{eq}<Half />{dot}1<SupText>2</SupText>{dot}{x}{eq}<Half />{x}</M>,</Line>
            <Line $h={41} $center><M><S tri="OAC" />{eq}<Half /><It>OA</It>{dot}<It>AC</It>{eq}<Half />{dot}1{dot}{tgx}{eq}<Half />{tgx}</M>.</Line>
            <Line $h={40}>Тогда имеет место следующее двойное неравенство, связывающее площади указанных фигур:</Line>
            <Line $h={39} $center><M><Half />{sinx}{lt}<Half />{x}{lt}<Half />{tgx}<Space $w={9} />{iff}</M></Line>
            <Line $h={41} $center><M>{iff}<Space $w={9} />{sinx}{lt}{x}{lt}{tgx}.</M></Line>
            <Line $h={36}>Разделим все члены последнего неравенства на <M>{sinx}{gt}0</M>:</Line>
            <Line $h={44} $center><M><Frac n={sinx} d={sinx} />{lt}<Frac n={x} d={sinx} />{lt}<Frac n={tgx} d={sinx} /><Space $w={10} />{iff}<Space $w={10} />1{lt}<Frac n={x} d={sinx} />{lt}<Frac n="1" d={cosx} />.</M></Line>
            <Line $h={38}>Далее запишем двойное неравенство для обратных функций</Line>
            <Line $h={39} $center><M>1{gt}<Frac n={sinx} d={x} />{gt}{cosx}.</M></Line>
            <Line $h={41}>Полученное неравенство доказано для <M>{x}<InRel>∈</InRel><Big>(</Big>0, <Frac n={<X>π</X>} d="2" /><Big>)</Big></M>, но оно верно и для <M>{x}<InRel>∈</InRel><Big>(</Big>−<Frac n={<X>π</X>} d="2" />; 0<Big>)</Big></M>, поскольку функции <M><It $flush>y</It>{eq}{cosx}</M>, <M><It $flush>y</It>{eq}<Frac n={<>sin&nbsp;&nbsp;{x}</>} d={x} />−</M>&nbsp; четные:</Line>
            <Line $h={46} $center><M><Fn $tight>cos</Fn>(−{x}){eq}{cosx},<Space $w={15} /><Frac n={<>sin&nbsp; (−{x})</>} d={<>−{x}</>} />{eq}<Frac n={<>−sin&nbsp;&nbsp;{x}</>} d={<>−{x}</>} />{eq}<Frac n={<>sin&nbsp;&nbsp;{x}</>} d={x} />.</M></Line>
            <Line $h={38}>Перейдем к пределу в двойном неравенстве при <M>{x} → 0</M>.</Line>
          </Proof>
        </Main>

        <RightEdge>
          <DrawerToggle><svg width="9" height="14" fill="none" stroke="#1d2125" strokeWidth="2"><path d="M7.500 1L1.500 7l6 6" /></svg></DrawerToggle>
          <PageThumb />
        </RightEdge>
      </Page>

      <Taskbar>
        <TaskLeft>
          <svg width="16" height="16" fill="#fff"><path d="M0 2.300L6.600 1.400v6.200H0zM7.400 1.300L16 0v7.600H7.400zM0 8.400h6.600v6.200L0 13.700zM7.400 8.400H16V16l-8.600-1.300z" /></svg>
          <TaskIconWrap $ml={29}><svg width="22" height="22" fill="none" stroke="#fff" strokeWidth="2"><circle cx="13.500" cy="8.500" r="7" /><path d="M8.500 13.500L1 21" /></svg></TaskIconWrap>
          <TaskIconWrap $ml={28}><svg width="17" height="16" fill="none" stroke="#fff" strokeWidth="1.200"><path d="M1 0v3h10V0M1 16v-3h10v3M1 5.500h10v5H1zM15 0v3M15 7v9" /><path d="M14 4.500h2.500v2H14z" fill="#fff" /></svg></TaskIconWrap>
          <TaskLabel>Ссылки</TaskLabel>
        </TaskLeft>
        <TaskApps>
          <TaskApp $w={40} $ml={9}><RoundApp $bg="#5865f2"><FaDiscord size={15} /></RoundApp><AppBadge>9+</AppBadge></TaskApp>
          <TaskApp $w={48} $ml={5} $current>
            <svg width="25" height="25" viewBox="0 0 25 25">
              <defs>
                <linearGradient id="edTop" x1="0" y1=".3" x2="1" y2=".5"><stop offset="0" stopColor="#2aa9e6" /><stop offset=".5" stopColor="#2fc8c8" /><stop offset="1" stopColor="#62dd5c" /></linearGradient>
                <linearGradient id="edLow" x1="0" y1="0" x2=".6" y2="1"><stop offset="0" stopColor="#1a8ddb" /><stop offset="1" stopColor="#0c57a8" /></linearGradient>
              </defs>
              <path d="M.5 12C1 5 6 .5 12.500.5 20 .5 24.500 6 24.500 11c0 4-3 6-6.500 6-3 0-4-1-4-2s1-1.300 1-3-2-4-5.500-4C5 8 1.500 10.500.5 12z" fill="url(#edTop)" />
              <path d="M.5 13C1 10 5 8 9.500 8c3 0 5 1.500 5.400 3-4-1.500-7 1.500-6.500 5.500.5 4 5 6.500 9 5.500 1.500-.4 3-1 4-2-2 3-5.500 4.500-9 4.500C6 24.500 0 19 .5 13z" fill="url(#edLow)" />
              <path d="M8.400 16.500c.5 4 5 6.500 9 5.500 2-.5 3.800-1.600 4.800-3-5 2-10.200.500-10.200-4 0-1.500.8-2.800 2-3.800-3.500-1-6 1.800-5.600 5.300z" fill="#10407f" />
            </svg>
          </TaskApp>
          <TaskApp $w={40} $ml={5}><RoundApp $bg="#2a9fd8"><FaTelegramPlane size={14} /></RoundApp><AppBadge $square>..99</AppBadge></TaskApp>
          <TaskApp $w={40} $ml={9}><svg width="22" height="18"><path d="M0 0h8l2 2h12v4H0z" fill="#e0a21a" /><path d="M0 3h22v14H0z" fill="#fdd663" /><path d="M4 18v-8h14v8h-4v-4H8v4z" fill="#3f8fd2" /></svg></TaskApp>
        </TaskApps>
        <Tray>
          <TrayItem $ml={0}><svg width="25" height="17" viewBox="0 0 25 17"><defs><linearGradient id="cl" x1="0" y1="0" x2="0" y2="1"><stop offset="0" stopColor="#8fb3ee" /><stop offset="1" stopColor="#d3e2fb" /></linearGradient></defs><path d="M5.500 16.500a5 5 0 0 1-.6-10A7.500 7.500 0 0 1 18.500 5.500a5.500 5.500 0 0 1 1 11z" fill="url(#cl)" /></svg></TrayItem>
          <TrayItem $ml={25}><svg width="13" height="8" fill="none" stroke="#fff" strokeWidth="1.500"><path d="M1 7l5.500-5.500L12 7" /></svg></TrayItem>
          <TrayItem $ml={9}><svg width="17" height="14" fill="none" stroke="#fff" strokeWidth="1.200"><path d="M5 2h11v8H3V6M.6.6h4v3.600H.6zM2.600 4.500V13M9.500 10v3M6 13h7" /></svg></TrayItem>
          <TrayItem $ml={7}><svg width="17" height="14" fill="none" stroke="#fff" strokeWidth="1.100"><path d="M1 5h2.500L7 1.500v11L3.500 9H1zM9 5q1.200 2 0 4" /><path d="M11.500 3.500q2.500 3.500 0 7M13.500 1.500q4 5.500 0 11" stroke="#77797b" /></svg></TrayItem>
          <TrayItem $ml={10}>РУС</TrayItem>
          <Clock><div>10:08</div><div>27.10.2023</div></Clock>
          <TrayItem $ml={16}><svg width="17" height="17" fill="none" stroke="#fff" strokeWidth="1.200"><path d="M1 1h15v12h-5l-2.500 2.500L6 13H1z" /></svg></TrayItem>
          <DesktopPeek />
        </Tray>
      </Taskbar>
    </Desktop>
  );
}
